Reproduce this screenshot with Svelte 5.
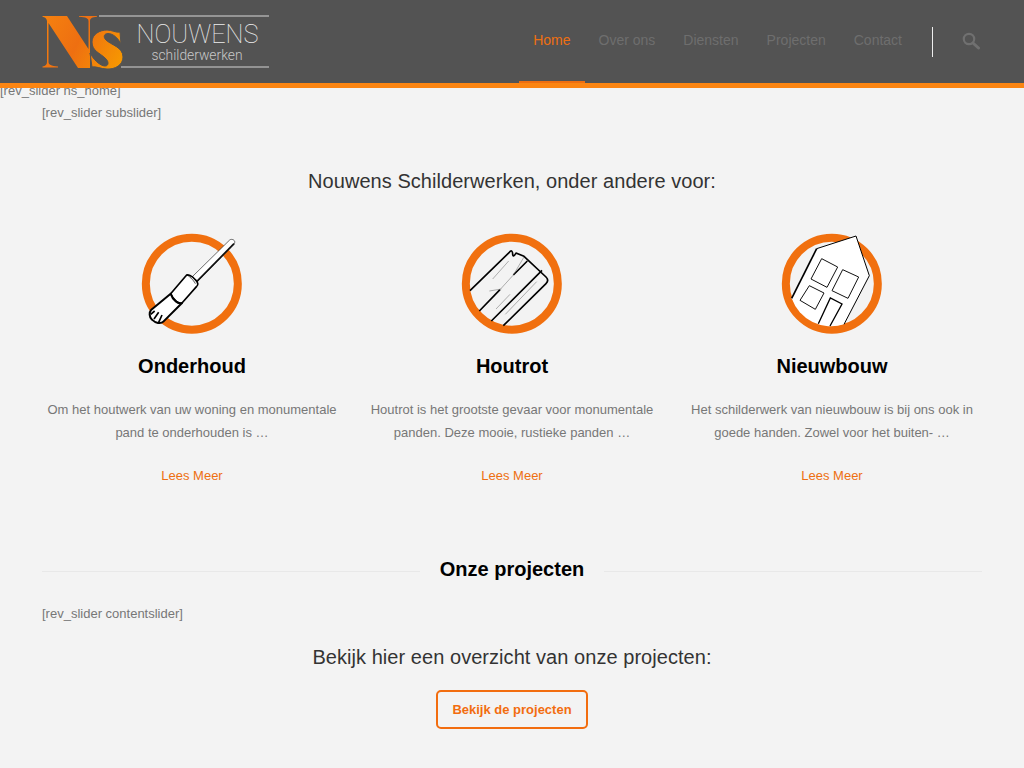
<script>
  const nav = ['Home', 'Over ons', 'Diensten', 'Projecten', 'Contact'];
  const services = [
    { icon: 'brush', title: 'Onderhoud', lines: ['Om het houtwerk van uw woning en monumentale', 'pand te onderhouden is …'] },
    { icon: 'wood', title: 'Houtrot', lines: ['Houtrot is het grootste gevaar voor monumentale', 'panden. Deze mooie, rustieke panden …'] },
    { icon: 'house', title: 'Nieuwbouw', lines: ['Het schilderwerk van nieuwbouw is bij ons ook in', 'goede handen. Zowel voor het buiten- …'] }
  ];
</script>

<header>
  <a class="logo" href="#home" aria-label="Nouwens Schilderwerken">
    <svg width="228" height="56" viewBox="0 0 228 56">
      <defs>
        <linearGradient id="ns" gradientUnits="userSpaceOnUse" x1="0" y1="5" x2="82" y2="50">
          <stop offset="0" stop-color="#f5810f" />
          <stop offset="0.45" stop-color="#ee6f11" />
          <stop offset="1" stop-color="#f79b00" />
        </linearGradient>
      </defs>
      <path fill="url(#ns)" d="M0.500 1H25L46.500 34V6C46.500 3.500 44 2 37 1.700V1H55V1.700C50 2 48 3.500 48 6V53H36L6.500 8V47C6.500 49.500 9 51 16 51.500V52.500H0.500V51.500C3.500 51 5 49.500 5 47V6C4.500 3.500 3 2 0.500 1.700Z" />
      <path fill="url(#ns)" stroke="#535353" stroke-width="1" d="M78 17L79 29C76 23 71 18.500 66 18.500C62 18.500 61 22 64 25C69 30 81 32 81 42C81 50 73 54.500 65 54C59 54 54 51 50 52L48 38C51 44 58 51 63 51C67 51 67 46 63 43C58 38 50 36 50 27C50 19 58 15 65 15C70 15 74 18 78 17Z" />
      <path class="rule-top" d="M57 1H227" />
      <path class="rule-bottom" d="M79 52H227" />
      <text class="brand" x="94.500" y="28.300" textLength="122" lengthAdjust="spacingAndGlyphs">NOUWENS</text>
      <text class="sub" x="109.500" y="44.500" textLength="91" lengthAdjust="spacingAndGlyphs">schilderwerken</text>
    </svg>
  </a>

  <nav>
    {#each nav as item, i}
      <a href="#{item}" class:active={i === 0}>{item}</a>
    {/each}
    <span class="divider"></span>
    <svg class="search" width="18" height="18" viewBox="0 0 18 18" aria-label="Zoeken">
      <circle cx="7" cy="7" r="5.200" fill="none" stroke="#707070" stroke-width="2.200" />
      <path d="M11 11l5.500 5" stroke="#707070" stroke-width="3" stroke-linecap="round" />
    </svg>
  </nav>
</header>

<div class="shortcode first">[rev_slider ns_home]</div>

<main>
  <div class="shortcode sub-slider">[rev_slider subslider]</div>

  <h2 class="lead">Nouwens Schilderwerken, onder andere voor:</h2>

  <section class="services">
    {#each services as s}
      <article>
        <svg class="icon" width="125" height="115" viewBox="0 0 375 345">
          <circle cx="185.500" cy="176" r="138" fill="none" stroke="#f1700f" stroke-width="24" />
          {#if s.icon === 'brush'}
            <path d="M298 46C302 41 312 43 314 49C315 53 313 57 310 60L202 170L186 156Z" fill="#fff" stroke="#222" stroke-width="2" />
            <path d="M312 56L200 170" stroke="#111" stroke-width="5" />
            <path d="M168 152C172 146 186 152 196 164C204 172 206 180 200 184L156 234C148 238 130 226 122 206Z" fill="#fff" stroke="#000" stroke-width="5" stroke-linejoin="round" />
            <path d="M122 206L64 254C57 262 57 276 66 284C76 294 92 298 100 290L156 234C146 238 128 226 122 206Z" fill="#fff" stroke="#000" stroke-width="6" stroke-linejoin="round" />
            <path d="M62 268L74 258M72 282L86 262M86 292L96 270" stroke="#000" stroke-width="5" fill="none" />
            <path d="M170 150C176 152 190 164 196 176" stroke="#000" stroke-width="2" fill="none" />
          {:else if s.icon === 'wood'}
            <path d="M60 197L178 82C184 74 188 78 188 88C188 96 194 92 198 84L222 94L288 156C294 162 294 170 288 176L160 302" fill="none" stroke="#000" stroke-width="5" stroke-linejoin="round" />
            <path d="M88 258L150 194M190 150L232 108M124 288L276 136" stroke="#000" stroke-width="5" fill="none" />
            <path d="M150 194L190 150M128 162L176 108M118 198L154 192M138 252L180 208M166 268L260 170M190 150L222 96" stroke="#666" stroke-width="1.500" fill="none" />
          {:else}
            <path d="M65 220L140 71L258 33L298 152L222 298A126 126 0 0 1 65 220Z" fill="#fff" />
            <path d="M65 220L140 71" stroke="#000" stroke-width="5" fill="none" />
            <path d="M140 71L258 33L298 152L222 298" stroke="#000" stroke-width="3" fill="none" />
            <path d="M155 101L203 126L171 187L123 162Z" fill="none" stroke="#111" stroke-width="3" />
            <path d="M218 134L266 156L234 220L186 197Z" fill="none" stroke="#111" stroke-width="3" />
            <path d="M118 182L162 204L136 253L90 226Z" fill="none" stroke="#111" stroke-width="3" />
            <path d="M145 296L181 219L216 237L180 303" fill="none" stroke="#000" stroke-width="4" />
          {/if}
        </svg>
        <h3>{s.title}</h3>
        <p>{s.lines[0]}<br />{s.lines[1]}</p>
        <a class="more" href="#more">Lees Meer</a>
      </article>
    {/each}
  </section>

  <div class="separator"><h2>Onze projecten</h2></div>

  <div class="shortcode content-slider">[rev_slider contentslider]</div>

  <h2 class="lead second">Bekijk hier een overzicht van onze projecten:</h2>

  <div class="cta"><a href="#projecten">Bekijk de projecten</a></div>
</main>

<style>
  :global(body) {
    background: #f3f3f3;
    font-family: "Liberation Sans", Arial, sans-serif;
    color: #777;
    overflow: hidden;
  }
  a {
    text-decoration: none;
  }
  header {
    height: 83px;
    background: #535353;
    border-bottom: 5px solid #fb8512;
    padding: 0 42px;
    display: flex;
    justify-content: space-between;
    position: relative;
    z-index: 1;
  }
  .logo {
    display: block;
    margin-top: 15px;
    height: 56px;
  }
  .rule-top {
    stroke: #d8d8d8;
    stroke-width: 1.200;
    fill: none;
  }
  .rule-bottom {
    stroke: #a8a8a8;
    stroke-width: 1.600;
    fill: none;
  }
  .brand {
    font-family: Roboto, sans-serif;
    font-weight: 100;
    font-size: 25px;
    fill: #eee;
  }
  .sub {
    font-family: Roboto, sans-serif;
    font-weight: 300;
    font-size: 14px;
    fill: #c8c8c8;
  }
  nav {
    display: flex;
    align-items: flex-start;
    height: 83px;
  }
  nav a {
    font-size: 14px;
    line-height: 80px;
    height: 81px;
    color: #6e6e6e;
    padding: 0 14px;
  }
  nav a.active {
    color: #ee6f11;
    border-bottom: 2px solid #ee6f11;
  }
  .divider {
    width: 1px;
    height: 30px;
    background: #eee;
    margin: 27px 29px 0 16px;
  }
  .search {
    margin-top: 32px;
    margin-right: 2px;
  }
  .shortcode {
    font-size: 13px;
    line-height: 18px;
    color: #777;
  }
  .first {
    margin-top: -6px;
    height: 22px;
  }
  main {
    padding: 0 42px;
  }
  .sub-slider {
    height: 18px;
  }
  .lead {
    margin: 0;
    font-weight: 400;
    font-size: 20px;
    line-height: 28px;
    letter-spacing: 0.05px;
    color: #333;
    text-align: center;
  }
  h2.lead {
    margin-top: 45px;
  }
  .services {
    display: grid;
    grid-template-columns: repeat(3, 300px);
    gap: 20px;
    margin-top: 30px;
  }
  article {
    display: flex;
    flex-direction: column;
    align-items: center;
    text-align: center;
  }
  .icon {
    display: block;
  }
  h3 {
    margin: 13px 0 0;
    font-size: 20px;
    line-height: 26px;
    color: #000;
  }
  article p {
    margin: 19px 0 0;
    font-size: 13px;
    line-height: 23px;
    color: #777;
  }
  .more {
    margin-top: 23px;
    font-size: 13px;
    line-height: 18px;
    color: #ee6f11;
  }
  .separator {
    margin-top: 70px;
    display: flex;
    align-items: center;
    gap: 20px;
  }
  .separator::before,
  .separator::after {
    content: "";
    flex: 1;
    height: 1px;
    margin-top: 5px;
    background: #e8e8e8;
  }
  .separator h2 {
    margin: 0;
    font-size: 20px;
    line-height: 28px;
    color: #000;
  }
  .content-slider {
    margin-top: 22px;
  }
  h2.second {
    margin-top: 20px;
  }
  .cta {
    display: flex;
    justify-content: center;
    margin-top: 19px;
  }
  .cta a {
    display: block;
    width: 148px;
    height: 35px;
    line-height: 35px;
    text-align: center;
    border: 2px solid #f26d0f;
    border-radius: 5px;
    font-size: 13px;
    font-weight: 700;
    color: #f26d0f;
  }
</style>
